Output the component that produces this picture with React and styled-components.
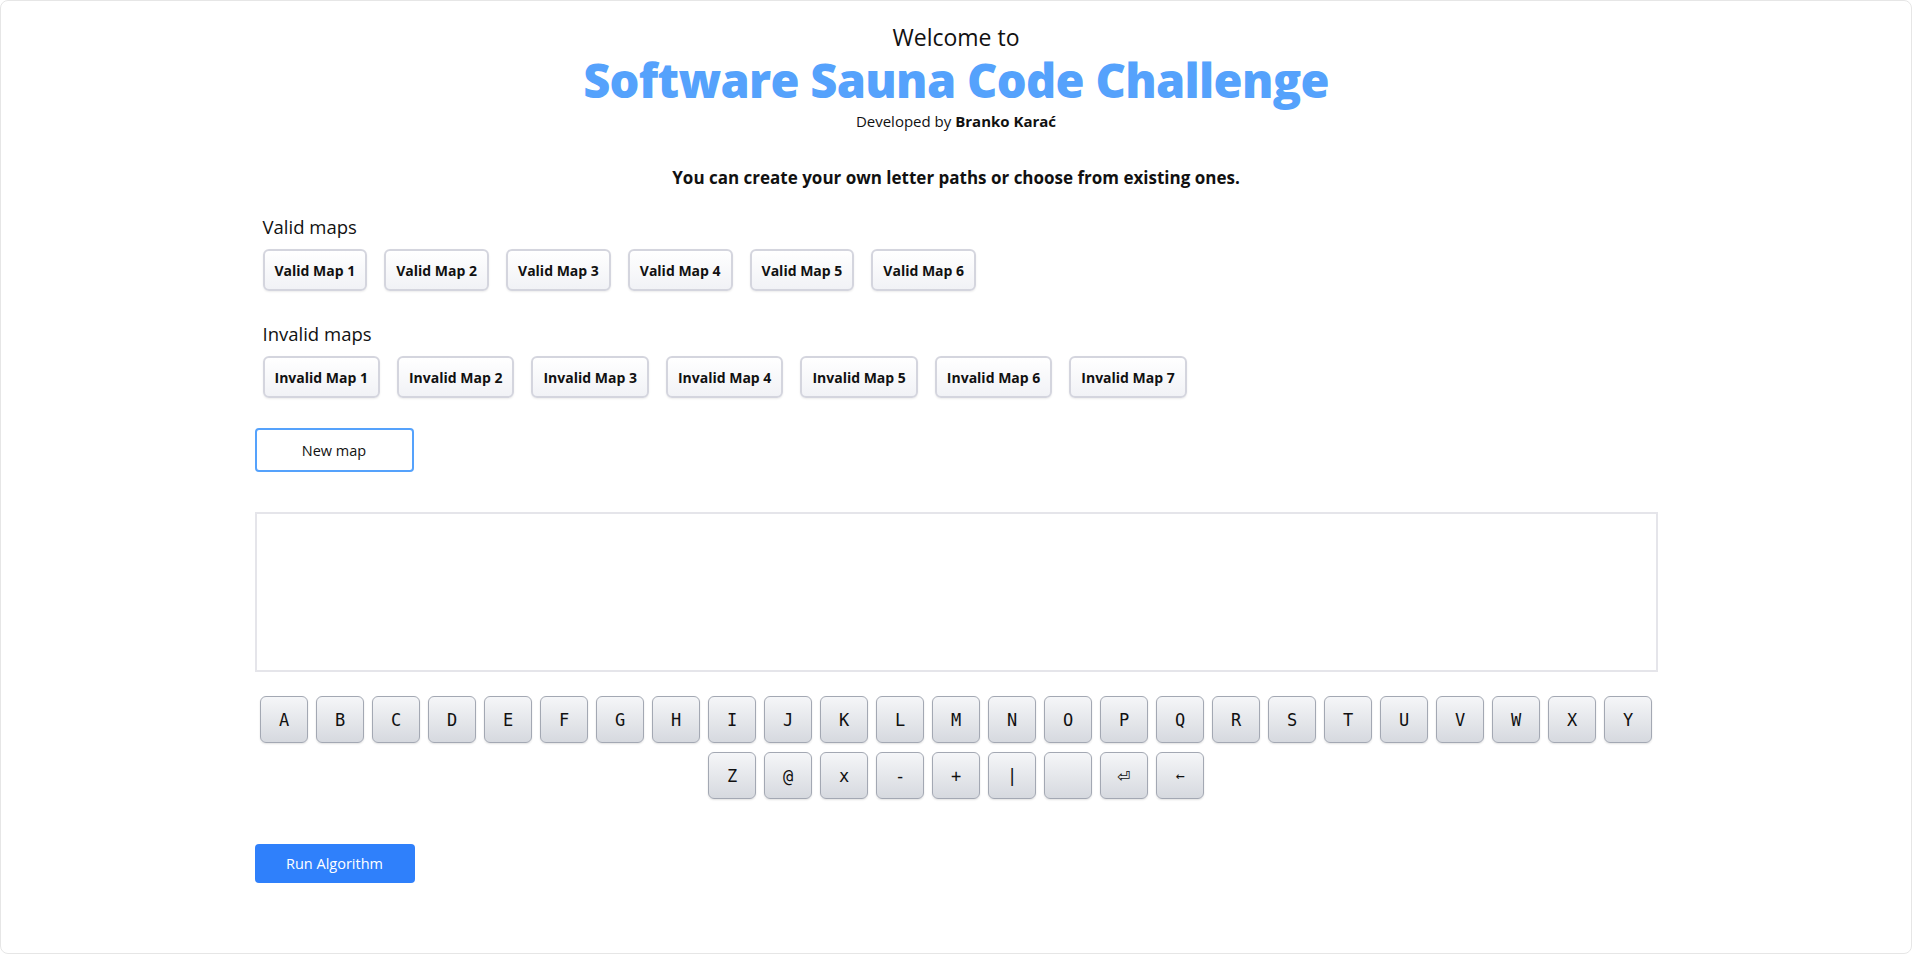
import React from "react";
import styled, { createGlobalStyle } from "styled-components";

const GlobalStyle = createGlobalStyle`
  html, body {
    margin: 0;
    padding: 0;
    background: #ffffff;
  }
  body {
    font-family: "Open Sans", "Noto Sans", sans-serif;
    color: #111;
  }
  * { box-sizing: border-box; }
`;

const Frame = styled.div`
  min-height: 954px;
  background: #fff;
  border: 1px solid #e6e6e6;
  border-radius: 8px;
  overflow: hidden;
`;

const Header = styled.header`
  display: flex;
  flex-direction: column;
  align-items: center;
  padding-top: 20px;
  text-align: center;
`;

const Welcome = styled.div`
  font-size: 23px;
  line-height: 32px;
  color: #111;
`;

const Title = styled.h1`
  margin: 0;
  font-size: 47px;
  line-height: 54px;
  font-weight: 800;
  color: #55a2fc;
  letter-spacing: -0.7px;
`;

const Credit = styled.div`
  margin-top: 4px;
  font-size: 15px;
  line-height: 20px;
  b { font-weight: 700; }
`;

const Main = styled.main`
  width: 1403px;
  margin: 0 auto;
  display: flex;
  flex-direction: column;
  align-items: flex-start;
`;

const Intro = styled.p`
  align-self: stretch;
  margin: 36px 0 0;
  text-align: center;
  font-size: 17px;
  line-height: 22px;
  font-weight: 700;
`;

const MapGroup = styled.section`
  padding-left: 8px;
  margin-top: ${(p) => p.$top}px;
`;

const GroupLabel = styled.h3`
  margin: 0;
  font-size: 18.5px;
  line-height: 26px;
  font-weight: 400;
`;

const ButtonRow = styled.div`
  display: flex;
  gap: 17px;
  margin-top: 9px;
`;

const MapButton = styled.button`
  height: 42px;
  padding: 0 10px;
  border: 2px solid #d4d5de;
  border-radius: 6px;
  background: linear-gradient(#ffffff, #f1f2f6);
  box-shadow: 0 1px 2px rgba(0, 0, 0, 0.08);
  font-family: "Open Sans", sans-serif;
  font-size: 14px;
  font-weight: 700;
  color: #111;
  cursor: pointer;
`;

const NewMapButton = styled.button`
  margin-top: 30px;
  width: 159px;
  height: 44px;
  border: 2px solid #55a2fc;
  border-radius: 4px;
  background: #fff;
  font-family: "Open Sans", sans-serif;
  font-size: 14.5px;
  color: #111;
  cursor: pointer;
`;

const Editor = styled.textarea`
  margin-top: 40px;
  width: 100%;
  height: 160px;
  border: 2px solid #e5e5ea;
  resize: none;
  font-family: "DejaVu Sans Mono", monospace;
  font-size: 16px;
  outline: none;
`;

const Keyboard = styled.div`
  margin-top: 24px;
  align-self: stretch;
  display: flex;
  flex-wrap: wrap;
  justify-content: center;
  column-gap: 8px;
  row-gap: 9px;
`;

const Key = styled.button`
  width: 48px;
  height: 47px;
  padding: 0;
  border: 1px solid #a3a8b3;
  border-radius: 6px;
  background: linear-gradient(#f5f6f8, #d6d9df);
  box-shadow: 0 1px 2px rgba(0, 0, 0, 0.12);
  font-family: "DejaVu Sans Mono", monospace;
  font-size: ${(p) => p.$size || 17}px;
  color: #111;
  cursor: pointer;
`;

const RunButton = styled.button`
  margin-top: 45px;
  width: 160px;
  height: 39px;
  border: none;
  border-radius: 4px;
  background: #2f80fb;
  color: #fff;
  font-family: "Open Sans", sans-serif;
  font-size: 14.5px;
  cursor: pointer;
`;

const validMaps = [1, 2, 3, 4, 5, 6].map((n) => `Valid Map ${n}`);
const invalidMaps = [1, 2, 3, 4, 5, 6, 7].map((n) => `Invalid Map ${n}`);
const keys = [
  ..."ABCDEFGHIJKLMNOPQRSTUVWXY".split("").map((c) => ({ c })),
  { c: "Z" }, { c: "@" }, { c: "x" }, { c: "-" }, { c: "+" }, { c: "|" },
  { c: " " }, { c: "⏎", size: 22 }, { c: "←", size: 15 },
];

export default function App() {
  return (
    <>
      <GlobalStyle />
      <Frame>
        <Header>
          <Welcome>Welcome to</Welcome>
          <Title>Software Sauna Code Challenge</Title>
          <Credit>
            Developed by <b>Branko Karać</b>
          </Credit>
        </Header>
        <Main>
          <Intro>You can create your own letter paths or choose from existing ones.</Intro>
          <MapGroup $top={25}>
            <GroupLabel>Valid maps</GroupLabel>
            <ButtonRow>
              {validMaps.map((m) => (
                <MapButton key={m}>{m}</MapButton>
              ))}
            </ButtonRow>
          </MapGroup>
          <MapGroup $top={30}>
            <GroupLabel>Invalid maps</GroupLabel>
            <ButtonRow>
              {invalidMaps.map((m) => (
                <MapButton key={m}>{m}</MapButton>
              ))}
            </ButtonRow>
          </MapGroup>
          <NewMapButton>New map</NewMapButton>
          <Editor />
          <Keyboard>
            {keys.map((k, i) => (
              <Key key={i} $size={k.size}>{k.c}</Key>
            ))}
          </Keyboard>
          <RunButton>Run Algorithm</RunButton>
        </Main>
      </Frame>
    </>
  );
}
